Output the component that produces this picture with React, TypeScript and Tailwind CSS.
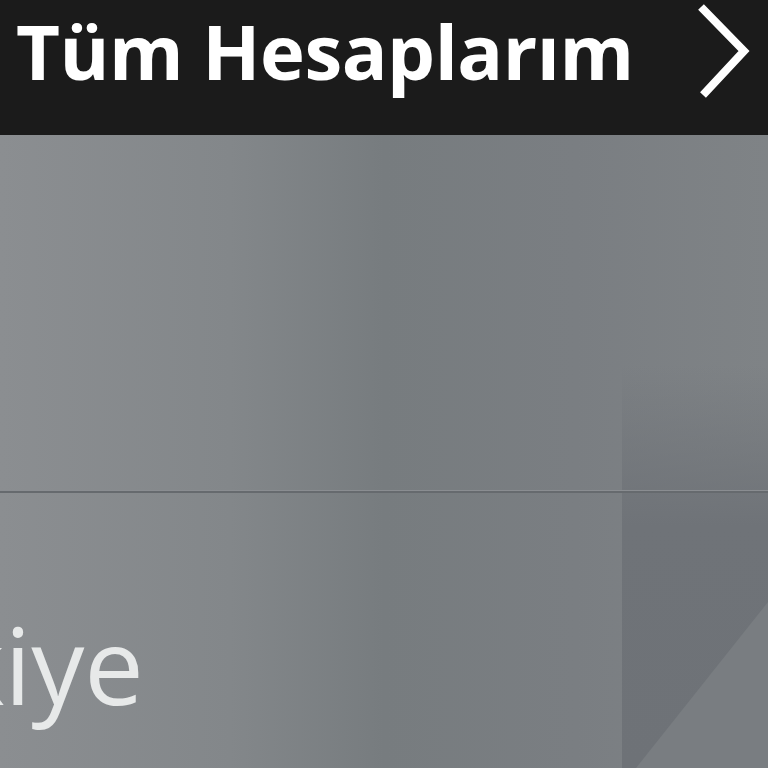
import React from 'react';

function Chevron() {
  return (
    <svg width="60" height="100" viewBox="0 0 60 100" fill="none">
      <path d="M5 6 L48 50 L7 94" stroke="#ffffff" strokeWidth="8" strokeLinecap="butt" strokeLinejoin="miter" />
    </svg>
  );
}

export default function App() {
  return (
    <div className="w-[768px] h-[768px] overflow-hidden flex flex-col" style={{ fontFamily: '"Open Sans", "Liberation Sans", sans-serif' }}>
      <header className="h-[135px] shrink-0 bg-[#1b1b1b] flex items-start justify-between pl-[16px] pr-[12px]">
        <h1 className="text-white font-bold text-[76px] leading-[1.33] tracking-[-0.5px]">Tüm Hesaplarım</h1>
        <div className="mt-[1px]">
          <Chevron />
        </div>
      </header>
      <main className="relative flex-1 overflow-hidden bg-[linear-gradient(to_right,#8b8e91_0%,#83878a_30%,#777c7f_50%,#7a7e82_75%,#7f8386_100%)]">
        <div className="absolute right-0 top-[230px] bottom-0 w-[146px] bg-[linear-gradient(to_bottom,rgba(110,114,119,0)_0%,#6f7378_40%,#6e7277_100%)]" />
        <div className="absolute right-0 bottom-0 w-[132px] h-[166px] bg-[#797d81] [clip-path:polygon(100%_0,100%_100%,0_100%)]" />
        <div className="relative flex flex-col">
          <div className="h-[355px]" />
          <div className="h-px bg-[#8a8d91]" />
          <div className="h-[2px] bg-[#666a6e]" />
          <div className="overflow-hidden whitespace-nowrap">
            <span className="block ml-[-218px] mt-[97px] text-[#e7e9e9] font-normal text-[106px] leading-[1.4]">Türkiye</span>
          </div>
        </div>
      </main>
    </div>
  );
}
